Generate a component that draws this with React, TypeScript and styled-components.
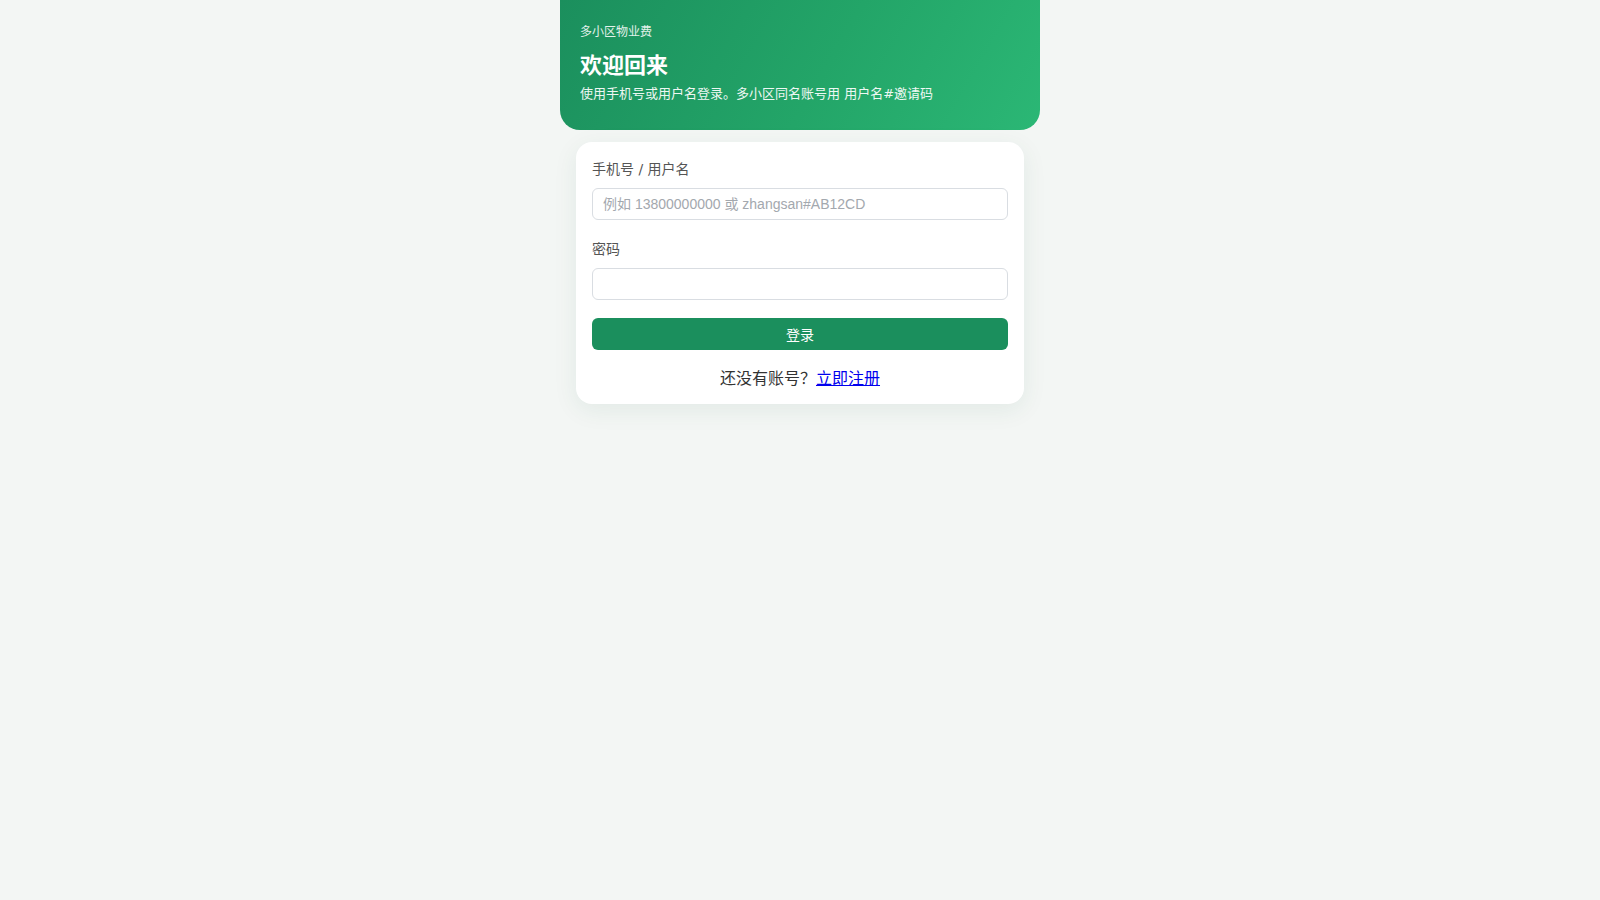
import React from "react";
import styled, { createGlobalStyle } from "styled-components";

const Global = createGlobalStyle`
  html, body { margin: 0; padding: 0; }
  body {
    background: #f3f6f4;
    font-family: "DejaVu Sans", "Noto Sans CJK SC", sans-serif;
    color: #222;
  }
  * { box-sizing: border-box; }
`;

const Page = styled.div`
  width: 480px;
  margin: 0 auto;
  display: flex;
  flex-direction: column;
  min-height: 900px;
`;

const Hero = styled.header`
  height: 130px;
  padding: 22px 20px 0;
  border-radius: 0 0 20px 20px;
  background: linear-gradient(120deg, #1b8f5d 0%, #23a568 55%, #2bb775 100%);
  color: #fff;
  display: flex;
  flex-direction: column;
`;

const Brand = styled.div`
  font-size: 12px;
  line-height: 20px;
  opacity: 0.88;
  font-family: "DejaVu Sans", "Noto Sans CJK SC", sans-serif;
`;

const Title = styled.h1`
  margin: 8px 0 0;
  font-size: 22px;
  line-height: 26px;
  font-weight: 700;
  font-family: "Noto Sans CJK SC", sans-serif;
`;

const Sub = styled.p`
  margin: 8px 0 0;
  font-size: 13px;
  line-height: 20px;
  opacity: 0.92;
  font-family: "DejaVu Sans", "Noto Sans CJK SC", sans-serif;
`;

const Card = styled.form`
  margin: 12px 16px 0;
  background: #fff;
  border-radius: 16px;
  padding: 16px 16px 16px;
  box-shadow: 0 6px 24px rgba(30, 90, 60, 0.08);
  display: flex;
  flex-direction: column;
`;

const Field = styled.div`
  display: flex;
  flex-direction: column;
  gap: 8px;
  margin-bottom: 18px;
`;

const Label = styled.label`
  font-size: 14px;
  line-height: 22px;
  color: #555;
  font-family: "DejaVu Sans", "Noto Sans CJK SC", sans-serif;
`;

const Input = styled.input`
  height: 32px;
  padding: 0 10px;
  border: 1px solid #d9dde2;
  border-radius: 6px;
  font-size: 14px;
  font-family: "Liberation Sans", "Noto Sans CJK SC", sans-serif;
  color: #222;
  outline: none;
  background: #fff;
  &::placeholder { color: #a3a8ae; }
`;

const Button = styled.button`
  height: 32px;
  border: none;
  border-radius: 6px;
  background: #1b8f5d;
  color: #fff;
  font-size: 14px;
  font-family: "Noto Sans CJK SC", sans-serif;
  cursor: pointer;
`;

const Footer = styled.p`
  margin: 16px 0 0;
  text-align: center;
  font-size: 16px;
  line-height: 22px;
  color: #333;
  font-family: "Noto Sans CJK SC", sans-serif;
  a { color: #0000ee; text-decoration: underline; }
`;

export default function App() {
  return (
    <>
      <Global />
      <Page>
        <Hero>
          <Brand>多小区物业费</Brand>
          <Title>欢迎回来</Title>
          <Sub>使用手机号或用户名登录。多小区同名账号用 用户名#邀请码</Sub>
        </Hero>
        <Card onSubmit={(e) => e.preventDefault()}>
          <Field>
            <Label>手机号 / 用户名</Label>
            <Input placeholder="例如 13800000000 或 zhangsan#AB12CD" />
          </Field>
          <Field>
            <Label>密码</Label>
            <Input type="password" />
          </Field>
          <Button type="submit">登录</Button>
          <Footer>
            还没有账号？<a href="#">立即注册</a>
          </Footer>
        </Card>
      </Page>
    </>
  );
}
